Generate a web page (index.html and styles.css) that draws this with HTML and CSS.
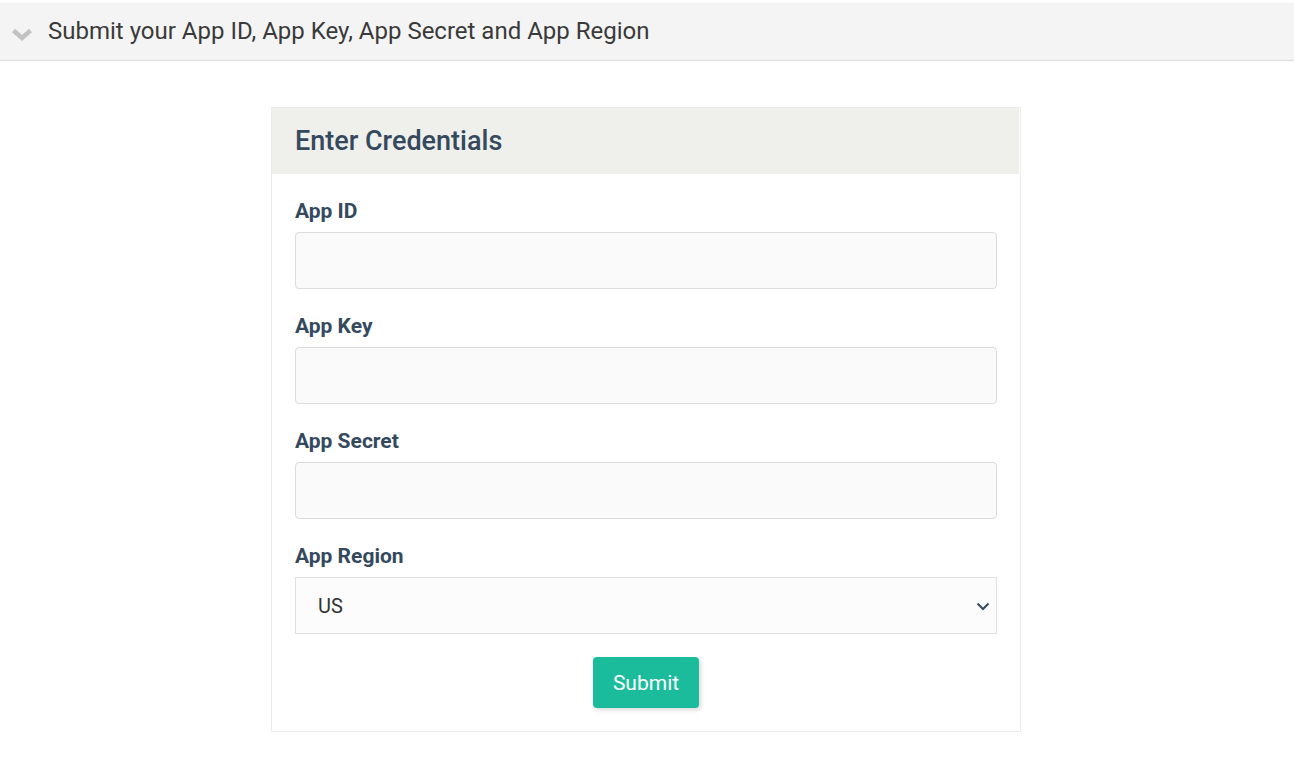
FILE: index.html
```html
<!DOCTYPE html>
<html lang="en">
<head>
<meta charset="utf-8">
<title>Submit Credentials</title>
<link rel="stylesheet" href="styles.css">
</head>
<body>
<div class="accordion">
  <svg class="acc-icon" width="22" height="14" viewBox="0 0 22 14" aria-hidden="true"><path d="M2.5 3.5 L11 11 L19.5 3.5" fill="none" stroke="#c2c2c2" stroke-width="4.5" stroke-linejoin="miter"/></svg>
  <span class="acc-title">Submit your App ID, App Key, App Secret and App Region</span>
</div>
<main class="wrap">
  <form class="card">
    <div class="card-head">Enter Credentials</div>
    <div class="card-body">
      <div class="field">
        <label class="label" for="appid">App ID</label>
        <input class="input" id="appid" type="text">
      </div>
      <div class="field">
        <label class="label" for="appkey">App Key</label>
        <input class="input" id="appkey" type="text">
      </div>
      <div class="field">
        <label class="label" for="appsecret">App Secret</label>
        <input class="input" id="appsecret" type="text">
      </div>
      <div class="field">
        <label class="label" for="appregion">App Region</label>
        <div class="select-wrap">
          <select class="input select" id="appregion">
            <option>US</option>
            <option>EU</option>
          </select>
          <svg class="select-caret" width="14" height="10" viewBox="0 0 14 10" aria-hidden="true"><path d="M1.5 2.5 L7 8 L12.5 2.5" fill="none" stroke="#34495e" stroke-width="2"/></svg>
        </div>
      </div>
      <div class="actions">
        <button class="btn" type="button">Submit</button>
      </div>
    </div>
  </form>
</main>
</body>
</html>
```
FILE: styles.css
```css
* { box-sizing: border-box; }
html, body { margin: 0; padding: 0; background: #fff; }
body {
  font-family: Roboto, "Liberation Sans", Arial, sans-serif;
  color: #333;
}
.accordion {
  margin-top: 3px;
  height: 58px;
  background: #f4f4f4;
  border-top: 1px solid #f0f0f0;
  border-bottom: 1px solid #dcdcdc;
  display: flex;
  align-items: center;
  padding-left: 11px;
  padding-bottom: 2px;
}
.acc-icon { margin-right: 15px; margin-top: 6px; }
.acc-title {
  font-size: 24px;
  color: #3a3a3a;
}
.wrap {
  display: flex;
  justify-content: center;
  padding-top: 46px;
  padding-right: 2px;
}
.card {
  width: 750px;
  border: 1px solid #ececec;
  background: #fff;
  margin: 0;
}
.card-head {
  height: 66px;
  background: #efefeb;
  display: flex;
  align-items: center;
  padding-left: 23px;
  font-size: 27px;
  color: #34495e;
  font-weight: 500;
  margin-right: 1px;
}
.card-body {
  padding: 23px;
}
.field { margin-bottom: 23px; }
.label {
  display: block;
  font-size: 21px;
  font-weight: 700;
  color: #34495e;
  line-height: 28px;
  margin-bottom: 7px;
}
.input {
  display: block;
  width: 100%;
  height: 57px;
  background: #fafafa;
  border: 1px solid #dcdcdc;
  border-radius: 4px;
  font-family: inherit;
  font-size: 20px;
  color: #333;
  padding: 0 22px;
  outline: none;
}
.select-wrap { position: relative; }
.select {
  appearance: none;
  -webkit-appearance: none;
  border-radius: 0;
  background: #fcfcfc;
  border-color: #e0e0e0;
}
.select-caret {
  position: absolute;
  right: 7px;
  top: 24px;
  pointer-events: none;
}
.actions {
  display: flex;
  justify-content: center;
}
.btn {
  width: 106px;
  height: 51px;
  background: #1abc9c;
  color: #fff;
  border: none;
  border-radius: 4px;
  font-family: inherit;
  font-size: 21px;
  box-shadow: 2px 2px 4px rgba(0,0,0,0.15);
  cursor: pointer;
}
```
